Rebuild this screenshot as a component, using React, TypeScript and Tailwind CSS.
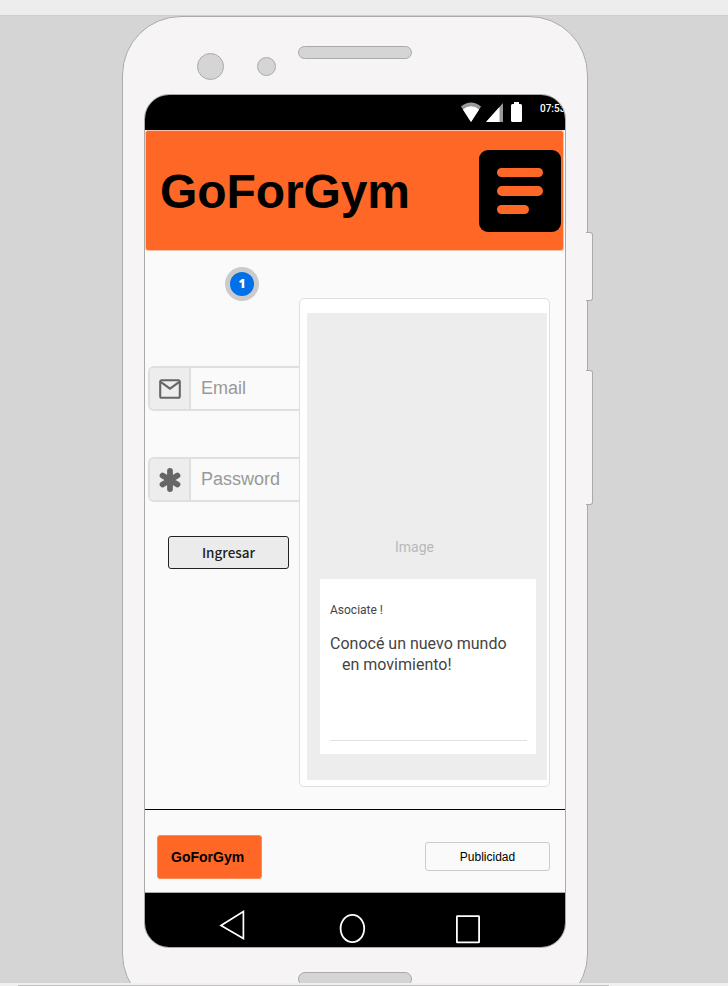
import React from "react";

function StatusBar() {
  return (
    <div className="flex h-[35px] shrink-0 items-start bg-black pl-[316px]">
      <svg className="mt-[7px] h-5 w-5 shrink-0" viewBox="0 0 20 20">
        <path d="M0 4.6Q10-3.4 20 4.6L10 20z" fill="#9a9a9a" />
        <path d="M1.9 7.6Q10 1 18.1 7.6L10 20z" fill="#fff" />
      </svg>
      <svg className="ml-[5px] mt-2 h-[19px] w-[17px] shrink-0" viewBox="0 0 17 19">
        <path d="M17 0V19H0z" fill="#999" />
        <path d="M13.5 4V19H0z" fill="#fff" />
      </svg>
      <svg className="ml-2 mt-1.5 h-[21px] w-[11px] shrink-0" viewBox="0 0 11 21">
        <path d="M3 1h5v2H9.5q1.5 0 1.5 1.5V19.5q0 1.5-1.5 1.5H1.5Q0 21 0 19.5V4.5Q0 3 1.5 3H3z" fill="#fff" />
      </svg>
      <span className="ml-[18px] mt-[7px] font-['Roboto',sans-serif] text-[10px] font-medium leading-[14px] text-white">07:53</span>
    </div>
  );
}

function Header() {
  return (
    <header className="flex h-[121px] w-[419px] shrink-0 items-start justify-between rounded-[3px] border border-[#f7c3ab] bg-[#ff6726] pl-[14px] pr-[2px]">
      <h1 className="mt-[33px] text-[48px] font-bold leading-[55px] tracking-[-0.1px] text-black">GoForGym</h1>
      <div className="mt-[19px] flex h-[82px] w-[82px] flex-col gap-[9px] rounded-[9px] bg-black pl-[18px] pt-[18px]">
        <span className="h-[9.3px] w-[46px] rounded-full bg-[#ff6726]" />
        <span className="h-[9.3px] w-[46px] rounded-full bg-[#ff6726]" />
        <span className="h-[9.3px] w-[32px] rounded-full bg-[#ff6726]" />
      </div>
    </header>
  );
}

function Field({ icon, label }: { icon: React.ReactNode; label: string }) {
  return (
    <div className="ml-[3px] flex h-[45px] w-[152px] shrink-0 overflow-hidden rounded-l-[6px] border-2 border-r-0 border-[#dfdfdf]">
      <div className="flex w-[41px] shrink-0 items-center justify-center border-r-2 border-[#dfdfdf] bg-[#ededed]">{icon}</div>
      <span className="pl-[10px] text-[18px] leading-[41px] text-[#999]">{label}</span>
    </div>
  );
}

const MailIcon = () => (
  <svg className="h-5 w-[22px]" viewBox="0 0 22 20">
    <rect x="1.2" y="1.2" width="19.6" height="17.6" rx="1.5" fill="none" stroke="#666" strokeWidth="2.1" />
    <path d="M2 3.2L11 9.7L20 3.2" fill="none" stroke="#666" strokeWidth="2.1" />
  </svg>
);

const AsteriskIcon = () => (
  <svg className="h-6 w-[22px]" viewBox="0 0 22 24">
    <path d="M11 2.9V21.1M3.5 7.6L18.5 16.4M18.5 7.6L3.5 16.4" fill="none" stroke="#666" strokeWidth="5.8" strokeLinecap="round" />
  </svg>
);

function LoginColumn() {
  return (
    <div className="flex w-[154px] shrink-0 flex-col">
      <div className="ml-20 mt-4 flex h-[34px] w-[34px] shrink-0 items-center justify-center rounded-full bg-[#cbcbcb]">
        <div className="flex h-6 w-6 items-center justify-center rounded-full bg-[#0070e8] font-['Open_Sans',sans-serif] text-[12px] font-extrabold text-white">1</div>
      </div>
      <div className="h-[65px] shrink-0" />
      <Field icon={<MailIcon />} label="Email" />
      <div className="h-[46px] shrink-0" />
      <Field icon={<AsteriskIcon />} label="Password" />
      <button className="ml-[23px] mt-[34px] h-[33px] w-[121px] shrink-0 rounded-[3px] border border-[#222] bg-[#ebebeb] font-['Noto_Sans_CJK_SC',sans-serif] text-[13.5px] font-medium leading-[31px] text-[#222]">Ingresar</button>
    </div>
  );
}

function PromoCard() {
  return (
    <section className="mt-[47px] flex h-[489px] w-[251px] shrink-0 flex-col rounded-[5px] border border-[#dedede] bg-white px-[7px] pr-[2px] pt-[14px]">
      <div className="flex h-[467px] w-[240px] flex-col bg-[#ededed] font-['Roboto',sans-serif]">
        <p className="mt-[226px] pl-[88px] text-[14px] leading-4 text-[#b9b9b9]">Image</p>
        <div className="ml-[13px] mt-6 flex h-[175px] w-[216px] flex-col bg-white px-[10px] text-[#444]">
          <p className="mt-6 text-[12px] leading-[14px]">Asociate !</p>
          <p className="mt-4 whitespace-nowrap text-[16px] leading-[21px]">
            Conocé un nuevo mundo
            <br />
            <span className="ml-3">en movimiento!</span>
          </p>
          <div className="mt-[65px] h-px w-[197px] bg-[#e0e0e0]" />
        </div>
      </div>
    </section>
  );
}

function Footer() {
  return (
    <footer className="flex h-[83px] shrink-0 items-start justify-between border-t border-black pl-3 pr-[15px]">
      <div className="mt-[25px] flex h-[44px] w-[105px] items-center rounded-[3px] border border-[#ff8a58] bg-[#ff6726] pl-[13px] text-[14px] font-bold text-black">GoForGym</div>
      <div className="mt-8 flex h-[29px] w-[125px] items-center justify-center rounded-[3px] border border-[#ccc] text-[12px] text-black">Publicidad</div>
    </footer>
  );
}

function NavBar() {
  return (
    <nav className="flex grow items-start border-t border-[#aaa] bg-black pl-[74px]">
      <svg className="mt-4 h-8 w-[27px] shrink-0" viewBox="0 0 27 32" fill="none" stroke="#fff" strokeWidth="1.7">
        <path d="M24.4 2.5V29.5L2 16.5z" />
      </svg>
      <svg className="ml-[93px] mt-5 h-8 w-[27px] shrink-0" viewBox="0 0 27 32" fill="none" stroke="#fff" strokeWidth="1.8">
        <ellipse cx="13.4" cy="15.5" rx="11.8" ry="13.7" />
      </svg>
      <svg className="ml-[89px] mt-5 h-8 w-[27px] shrink-0" viewBox="0 0 27 32" fill="none" stroke="#fff" strokeWidth="1.8">
        <rect x="1.9" y="3.2" width="22.2" height="26.2" rx=".5" />
      </svg>
    </nav>
  );
}

export default function App() {
  return (
    <div className="flex h-[986px] w-[728px] flex-col overflow-hidden bg-[#d5d5d5] font-['Liberation_Sans',Arial,sans-serif]">
      <div className="h-4 shrink-0 border-b border-[#cfcfcf] bg-[#ededed]" />
      <main className="h-[967px] shrink-0 overflow-hidden">
        <div className="relative ml-[122px] flex h-[997px] w-[466px] flex-col rounded-[59px] border border-[#aaa] bg-[#f6f4f5]">
          <div className="absolute -right-[6px] top-[215px] h-[69px] w-[7px] rounded-r-[3px] border border-l-0 border-[#aaa] bg-[#f6f4f5]" />
          <div className="absolute -right-[6px] top-[353px] h-[135px] w-[7px] rounded-r-[3px] border border-l-0 border-[#aaa] bg-[#f6f4f5]" />
          <div className="flex h-[77px] shrink-0 items-start pl-[74px]">
            <span className="mt-9 h-[27px] w-[27px] rounded-full border border-[#aaa] bg-[#d5d5d5]" />
            <span className="ml-[33px] mt-10 h-[19px] w-[19px] rounded-full border border-[#aaa] bg-[#d5d5d5]" />
            <span className="ml-[22px] mt-[29px] h-[13px] w-[114px] rounded-full border border-[#aaa] bg-[#d5d5d5]" />
          </div>
          <div className="ml-[21px] flex h-[854px] w-[422px] shrink-0 flex-col overflow-hidden rounded-[25px] border border-[#aaa] bg-[#fafafa]">
            <StatusBar />
            <Header />
            <div className="flex h-[558px] shrink-0">
              <LoginColumn />
              <PromoCard />
            </div>
            <Footer />
            <NavBar />
          </div>
          <div className="ml-[175px] mt-6 h-[14px] w-[114px] shrink-0 rounded-[7px] border border-[#aaa] bg-[#d5d5d5]" />
        </div>
      </main>
      <div className="flex h-[3px] shrink-0 flex-col justify-end bg-[#f0f0f0]">
        <div className="ml-[18px] h-px w-[591px] bg-[#c0c0c0]" />
      </div>
    </div>
  );
}
